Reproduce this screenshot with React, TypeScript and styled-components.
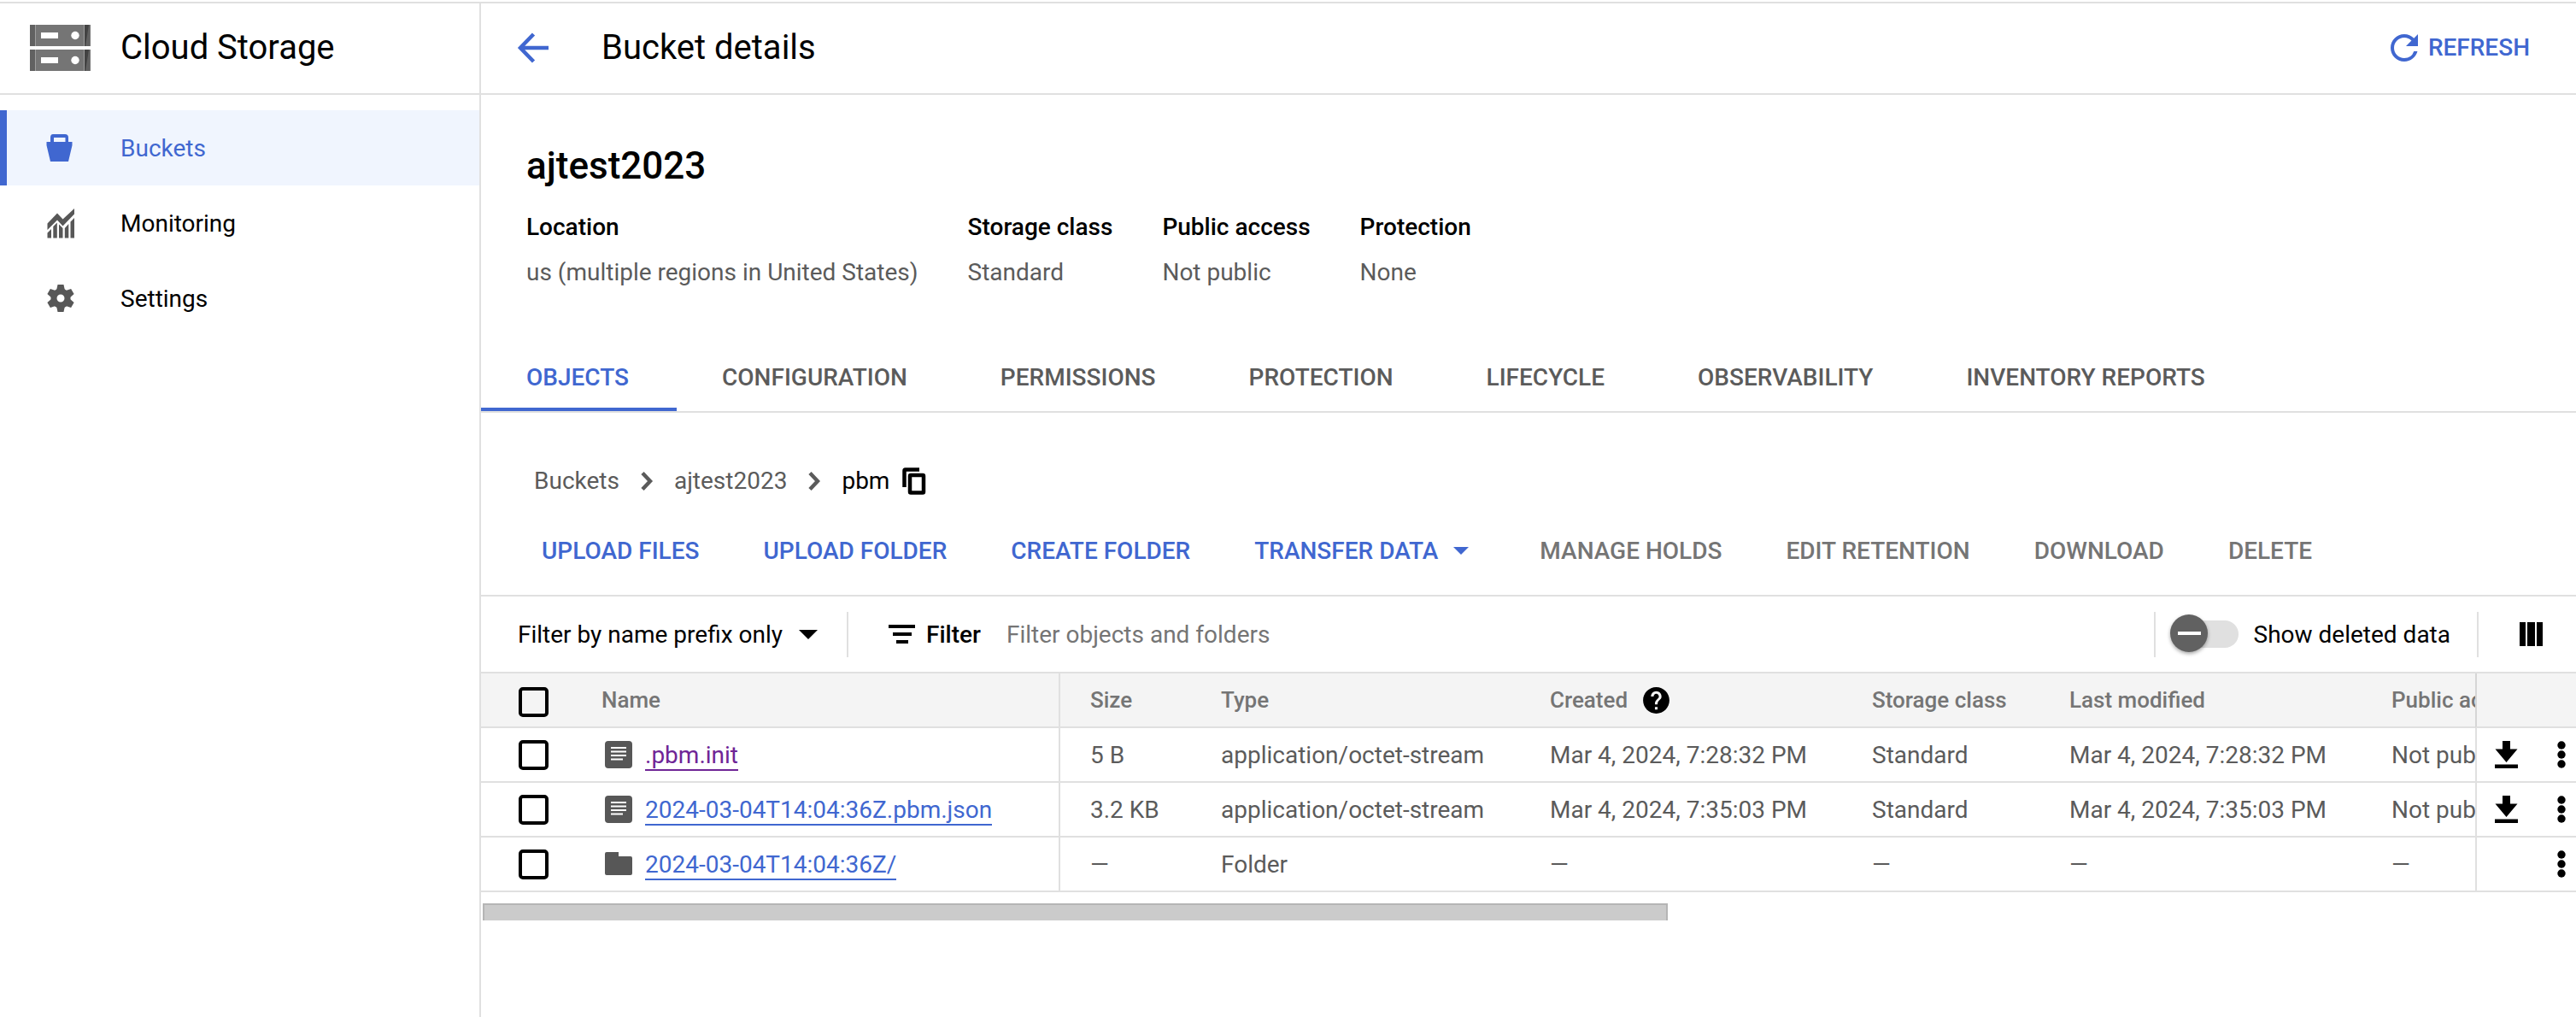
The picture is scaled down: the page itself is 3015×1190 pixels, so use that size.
import React from "react";
import styled, { createGlobalStyle } from "styled-components";
import { MdHelp, MdRefresh } from "react-icons/md";

const blue = "#4067d0";
const purple = "#6f2596";
const line = "#e0e0e0";
const grey = "#5b5b5b";
const muted = "#757575";

const GlobalStyle = createGlobalStyle`
  *, *::before, *::after { box-sizing: border-box; }
  body { margin: 0; background: #fff; }
  body, button, input, select {
    font-family: Roboto, "Liberation Sans", sans-serif;
    font-size: 28px;
    line-height: 41px;
    color: #000;
  }
  button { border: 0; padding: 0; background: none; cursor: pointer; }
  a { color: inherit; text-decoration: none; }
  svg { display: block; flex: none; }
`;

const Page = styled.div`
  display: flex;
  min-height: 100vh;
  border-top: 2px solid ${line};
  margin-top: 2px;
  margin-bottom: -2px;
`;

const Sidebar = styled.aside`
  flex: none;
  width: 563px;
  border-right: 2px solid ${line};
`;

const SidebarHeader = styled.header`
  display: flex;
  align-items: center;
  gap: 35px;
  height: 107px;
  padding: 0 35px 2px;
  border-bottom: 2px solid ${line};
`;

const Title = styled.h1`
  margin: 0;
  font-size: 40px;
  line-height: 48px;
  font-weight: 400;
`;

const Nav = styled.nav`
  display: flex;
  flex-direction: column;
  padding-top: 18px;
`;

const NavItem = styled.a<{ $active?: boolean }>`
  display: flex;
  align-items: center;
  gap: 51px;
  height: 88px;
  padding-left: 44px;
  border-left: 8px solid ${(p) => (p.$active ? blue : "transparent")};
  background: ${(p) => (p.$active ? "#f0f5fe" : "transparent")};
  color: ${(p) => (p.$active ? blue : "#000")};
  svg { color: ${(p) => (p.$active ? blue : "#575757")}; }
`;

const Main = styled.main`
  flex: 1;
  min-width: 0;
`;

const MainHeader = styled.header`
  display: flex;
  align-items: center;
  height: 107px;
  padding: 0 54px 2px 42px;
  border-bottom: 2px solid ${line};
`;

const BackButton = styled.button`
  color: ${blue};
  margin-right: 62px;
`;

const RefreshButton = styled.button`
  display: flex;
  align-items: center;
  gap: 4px;
  margin-left: auto;
  color: ${blue};
  font-weight: 500;
`;

const Summary = styled.section`
  padding: 57px 53px 56px;
`;

const BucketName = styled.h2`
  margin: 0 0 19px;
  font-size: 44px;
  line-height: 52px;
  font-weight: 500;
`;

const Facts = styled.dl`
  display: flex;
  gap: 58px;
  margin: 0;
  line-height: 53px;
  dt { font-weight: 500; }
  dd { margin: 0; color: ${grey}; }
`;

const Tabs = styled.div`
  display: flex;
  border-bottom: 2px solid ${line};
`;

const Tab = styled.button<{ $active?: boolean }>`
  height: 80px;
  padding: 4px 56px 0 53px;
  border-bottom: 4px solid ${(p) => (p.$active ? blue : "transparent")};
  color: ${(p) => (p.$active ? blue : grey)};
  font-weight: 500;
`;

const Breadcrumb = styled.nav`
  display: flex;
  align-items: center;
  gap: 25px;
  padding: 59px 62px 25px;
  color: ${grey};
`;

const Current = styled.span`
  display: flex;
  align-items: center;
  gap: 15px;
  color: #000;
`;

const Actions = styled.div`
  display: flex;
  padding: 0 34px 16px;
  border-bottom: 2px solid ${line};
`;

const Action = styled.button`
  display: flex;
  align-items: center;
  gap: 18px;
  height: 72px;
  padding: 0 38px 0 37px;
  color: ${blue};
  font-weight: 500;
  &:disabled { color: ${muted}; cursor: default; }
`;

const MenuAction = styled(Action)`
  padding-right: 46px;
`;

const FilterBar = styled.div`
  display: flex;
  align-items: center;
  height: 88px;
  padding: 0 39px 0 43px;
`;

const SelectLabel = styled.label`
  display: flex;
  align-items: center;
  gap: 19px;
  margin-right: 34px;
`;

const Select = styled.select`
  appearance: none;
  border: 0;
  padding: 0;
  background: none;
`;

const Divider = styled.span`
  flex: none;
  width: 2px;
  height: 53px;
  background: ${line};
`;

const FilterField = styled.label`
  display: flex;
  flex: 1;
  align-items: center;
  gap: 12px;
  margin-left: 47px;
  font-weight: 500;
`;

const FilterInput = styled.input`
  flex: 1;
  min-width: 0;
  margin-left: 18px;
  padding: 0;
  border: 0;
  background: none;
  outline: 0;
  &::placeholder { color: ${muted}; opacity: 1; }
`;

const SwitchLabel = styled.label`
  display: flex;
  align-items: center;
  gap: 18px;
  margin: 0 31px 0 23px;
`;

const Switch = styled.input`
  appearance: none;
  position: relative;
  width: 74px;
  height: 32px;
  margin: 0;
  border-radius: 16px;
  background: ${line};
  &::before {
    content: "";
    position: absolute;
    left: -6px;
    top: -7px;
    width: 44px;
    height: 44px;
    border-radius: 50%;
    background: #616161;
    box-shadow: 0 2px 4px rgba(0, 0, 0, 0.35);
  }
  &::after {
    content: "";
    position: absolute;
    left: 3px;
    top: 13px;
    width: 27px;
    height: 4px;
    background: #fff;
  }
`;

const ColumnsButton = styled.button`
  margin-left: 48px;
`;

const TableScroll = styled.div`
  overflow-x: auto;
  scrollbar-width: none;
  border-top: 2px solid ${line};
`;

const Table = styled.table`
  width: 4328px;
  table-layout: fixed;
  border-collapse: separate;
  border-spacing: 0;
  text-align: left;
`;

const Column = styled.col<{ $width?: number }>`
  width: ${(p) => (p.$width ? `${p.$width}px` : "auto")};
`;

const Cell = styled.td<{ $divided?: boolean }>`
  height: 64px;
  padding: 0 0 0 ${(p) => (p.$divided ? "35px" : "36px")};
  border-bottom: 2px solid ${line};
  border-left: ${(p) => (p.$divided ? `2px solid ${line}` : "0")};
  color: ${grey};
  white-space: nowrap;
`;

const HeadCell = styled(Cell).attrs({ as: "th", scope: "col" })`
  background: #f4f4f4;
  color: ${muted};
  font-size: 26px;
  font-weight: 500;
`;

const CheckCell = styled(Cell)`
  padding-left: 44px;
`;

const CheckHeadCell = styled(HeadCell)`
  padding-top: 4px;
  padding-left: 44px;
`;

const ActionCell = styled(Cell)`
  position: sticky;
  right: 0;
  padding: 0 12px 0 21px;
  border-left: 2px solid ${line};
  background: #fff;
`;

const ActionHeadCell = styled(HeadCell)`
  position: sticky;
  right: 0;
  border-left: 2px solid #d6d6d6;
`;

const Checkbox = styled.input`
  appearance: none;
  display: block;
  width: 35px;
  height: 35px;
  margin: 0;
  border: 4px solid #000;
  border-radius: 5px;
`;

const HeadLabel = styled.span`
  display: flex;
  align-items: center;
  gap: 15px;
`;

const ObjectName = styled.span`
  display: flex;
  align-items: center;
  gap: 15px;
  padding-left: 4px;
`;

const ObjectLink = styled.a<{ $visited?: boolean }>`
  padding-top: 3px;
  border-bottom: 2px solid;
  line-height: 33px;
  color: ${(p) => (p.$visited ? purple : blue)};
`;

const RowActions = styled.span`
  display: flex;
  align-items: center;
  justify-content: space-between;
`;

const MoreButton = styled.button`
  margin-left: auto;
`;

const ScrollTrack = styled.div`
  padding: 13px 2px 0;
`;

const ScrollThumb = styled.div`
  width: 56.66%;
  height: 20px;
  border: solid #b5b5b5;
  border-width: 2px 2px 0;
  background: #cbcbcb;
`;

const StorageLogo = () => (
  <svg width="71" height="54" viewBox="0 0 71 54" aria-hidden="true">
    {[0, 29].map((y) => (
      <g key={y} transform={`translate(0 ${y})`}>
        <path fill="#757575" d="M0 0h71v25H0z" />
        <path fill="#616161" d="M0 0h6v25H0z" />
        <path fill="#9e9e9e" d="M6 0h1v25H6zM63 0h1v25h-1z" />
        <path fill="#616161" d="M64 0h6v25h-6z" />
        <path fill="#424242" d="M64 0h5l-4 25h-1z" />
        <path fill="#fff" d="M13 9h20v7H13z" />
        <circle fill="#fff" cx="53" cy="12.5" r="4.7" />
      </g>
    ))}
  </svg>
);

const BucketIcon = () => (
  <svg width="38" height="38" viewBox="0 0 38 38" fill="currentColor" aria-hidden="true">
    <path
      fillRule="evenodd"
      d="M10 3h14q4 0 4 4v5h4.500v4l-4.500 19H7L2.500 16v-4H7V7q0-4 3-4zm1 4v5h13.500V7z"
    />
  </svg>
);

const MonitoringIcon = () => (
  <svg width="38" height="38" viewBox="0 0 38 38" fill="currentColor" aria-hidden="true">
    <path d="M3.500 19.500 15 7.500l6.500 7L35 2v6.500L21.500 22.500 15 15.500 3.500 27z" />
    <path d="M3.500 30.500 8 26v10.500H3.500zM10.300 23l4.500-4.500v18h-4.500zM17 20.500l4.500 4.500v11.500H17zM23.800 25l4.500-5v16.500h-4.500zM30.500 17.500 35 13v23.500h-4.500z" />
  </svg>
);

const GearIcon = () => (
  <svg width="38" height="38" viewBox="0 0 38 38" fill="currentColor" aria-hidden="true">
    <circle cx="19" cy="19" r="8" fill="none" stroke="currentColor" strokeWidth="7" />
    {[0, 60, 120, 180, 240, 300].map((angle) => (
      <path key={angle} transform={`rotate(${angle} 19 19)`} d="M15.500 3h7l1.500 7v3H14v-3z" />
    ))}
  </svg>
);

const BackIcon = () => (
  <svg width="37" height="36" viewBox="0 0 37 36" fill="none" stroke="currentColor" strokeWidth="4.500" aria-hidden="true">
    <path d="M37 18H5M19.500 2 4 18l15.500 16" />
  </svg>
);

const ChevronIcon = () => (
  <svg width="14" height="24" viewBox="0 0 14 24" fill="none" stroke="currentColor" strokeWidth="4.500" aria-hidden="true">
    <path d="M2 2.500 11 12l-9 9.500" />
  </svg>
);

const CopyIcon = () => (
  <svg width="28" height="32" viewBox="0 0 28 32" fill="none" stroke="currentColor" strokeWidth="4.500" aria-hidden="true">
    <path d="M20 2.500H3.500Q2.500 2.500 2.500 4v19" />
    <rect x="9" y="9" width="16" height="20.500" rx="1" />
  </svg>
);

const Caret = ({ width, height }: { width: number; height: number }) => (
  <svg width={width} height={height} viewBox="0 0 20 10" preserveAspectRatio="none" fill="currentColor" aria-hidden="true">
    <path d="M0 0h20L10 10z" />
  </svg>
);

const FilterIcon = () => (
  <svg width="32" height="24" viewBox="0 0 32 24" fill="currentColor" aria-hidden="true">
    <path d="M0 1h31v4H0zM5 10h22v4H5zM9 19h14v4H9z" />
  </svg>
);

const ColumnsIcon = () => (
  <svg width="27" height="28" viewBox="0 0 27 28" fill="currentColor" aria-hidden="true">
    <path d="M0 0h7v28H0zM9 0h9v28H9zM20 0h7v28h-7z" />
  </svg>
);

const FileIcon = () => (
  <svg width="32" height="32" viewBox="0 0 32 32" aria-hidden="true">
    <rect width="32" height="32" rx="4" fill="#575757" />
    <path fill="#fff" d="M7 7h18v2H7zM7 11.500h18v2H7zM7 16h18v2H7zM7 20.500h14v2H7z" />
  </svg>
);

const FolderIcon = () => (
  <svg width="32" height="28" viewBox="0 0 32 28" fill="#575757" aria-hidden="true">
    <path d="M2 0h14v5h14q2 0 2 2v18q0 2-2 2H2q-2 0-2-2V2q0-2 2-2z" />
  </svg>
);

const DownloadIcon = () => (
  <svg width="27" height="32" viewBox="0 0 27 32" aria-hidden="true">
    <path d="M9 0h9v9.500h8.500L13.500 25 .5 9.500H9zM0 27.500h27V32H0z" />
  </svg>
);

const MoreIcon = () => (
  <svg width="10" height="32" viewBox="0 0 10 32" aria-hidden="true">
    <circle cx="5" cy="5" r="4.700" />
    <circle cx="5" cy="16" r="4.700" />
    <circle cx="5" cy="27" r="4.700" />
  </svg>
);

const facts = [
  ["Location", "us (multiple regions in United States)"],
  ["Storage class", "Standard"],
  ["Public access", "Not public"],
  ["Protection", "None"],
];

const tabs = [
  "OBJECTS",
  "CONFIGURATION",
  "PERMISSIONS",
  "PROTECTION",
  "LIFECYCLE",
  "OBSERVABILITY",
  "INVENTORY REPORTS",
];

const disabledActions = ["MANAGE HOLDS", "EDIT RETENTION", "DOWNLOAD", "DELETE"];

type StorageObject = {
  name: string;
  folder?: boolean;
  visited?: boolean;
  size: string;
  type: string;
  date: string;
  storage: string;
  access: string;
};

const objects: StorageObject[] = [
  {
    name: ".pbm.init",
    visited: true,
    size: "5 B",
    type: "application/octet-stream",
    date: "Mar 4, 2024, 7:28:32 PM",
    storage: "Standard",
    access: "Not public",
  },
  {
    name: "2024-03-04T14:04:36Z.pbm.json",
    size: "3.2 KB",
    type: "application/octet-stream",
    date: "Mar 4, 2024, 7:35:03 PM",
    storage: "Standard",
    access: "Not public",
  },
  {
    name: "2024-03-04T14:04:36Z/",
    folder: true,
    size: "—",
    type: "Folder",
    date: "—",
    storage: "—",
    access: "—",
  },
];

export default function App() {
  return (
    <>
      <GlobalStyle />
      <Page>
        <Sidebar>
          <SidebarHeader>
            <StorageLogo />
            <Title as="div">Cloud Storage</Title>
          </SidebarHeader>
          <Nav>
            <NavItem href="#buckets" $active>
              <BucketIcon />
              Buckets
            </NavItem>
            <NavItem href="#monitoring">
              <MonitoringIcon />
              Monitoring
            </NavItem>
            <NavItem href="#settings">
              <GearIcon />
              Settings
            </NavItem>
          </Nav>
        </Sidebar>
        <Main>
          <MainHeader>
            <BackButton aria-label="Back">
              <BackIcon />
            </BackButton>
            <Title>Bucket details</Title>
            <RefreshButton>
              <MdRefresh size={48} />
              REFRESH
            </RefreshButton>
          </MainHeader>
          <Summary>
            <BucketName>ajtest2023</BucketName>
            <Facts>
              {facts.map(([label, value]) => (
                <div key={label}>
                  <dt>{label}</dt>
                  <dd>{value}</dd>
                </div>
              ))}
            </Facts>
          </Summary>
          <Tabs role="tablist">
            {tabs.map((tab, i) => (
              <Tab key={tab} role="tab" aria-selected={i === 0} $active={i === 0}>
                {tab}
              </Tab>
            ))}
          </Tabs>
          <Breadcrumb>
            <a href="#buckets">Buckets</a>
            <ChevronIcon />
            <a href="#ajtest2023">ajtest2023</a>
            <ChevronIcon />
            <Current>
              pbm
              <button aria-label="Copy path">
                <CopyIcon />
              </button>
            </Current>
          </Breadcrumb>
          <Actions>
            <Action>UPLOAD FILES</Action>
            <Action>UPLOAD FOLDER</Action>
            <Action>CREATE FOLDER</Action>
            <MenuAction>
              TRANSFER DATA
              <Caret width={18} height={9} />
            </MenuAction>
            {disabledActions.map((name) => (
              <Action key={name} disabled>
                {name}
              </Action>
            ))}
          </Actions>
          <FilterBar>
            <SelectLabel>
              <Select aria-label="Filter mode">
                <option>Filter by name prefix only</option>
              </Select>
              <Caret width={22} height={11} />
            </SelectLabel>
            <Divider />
            <FilterField>
              <FilterIcon />
              Filter
              <FilterInput placeholder="Filter objects and folders" />
            </FilterField>
            <Divider />
            <SwitchLabel>
              <Switch type="checkbox" role="switch" />
              Show deleted data
            </SwitchLabel>
            <Divider />
            <ColumnsButton aria-label="Column display options">
              <ColumnsIcon />
            </ColumnsButton>
          </FilterBar>
          <TableScroll>
            <Table>
              <colgroup>
                <Column $width={105} />
                <Column $width={571} />
                <Column $width={154} />
                <Column $width={385} />
                <Column $width={377} />
                <Column $width={231} />
                <Column $width={377} />
                <Column />
                <Column $width={118} />
              </colgroup>
              <thead>
                <tr>
                  <CheckHeadCell>
                    <Checkbox type="checkbox" aria-label="Select all objects" />
                  </CheckHeadCell>
                  <HeadCell>Name</HeadCell>
                  <HeadCell $divided>Size</HeadCell>
                  <HeadCell>Type</HeadCell>
                  <HeadCell>
                    <HeadLabel>
                      Created
                      <MdHelp size={37} color="#000" />
                    </HeadLabel>
                  </HeadCell>
                  <HeadCell>Storage class</HeadCell>
                  <HeadCell>Last modified</HeadCell>
                  <HeadCell>Public access</HeadCell>
                  <ActionHeadCell aria-label="Actions" />
                </tr>
              </thead>
              <tbody>
                {objects.map((o) => (
                  <tr key={o.name}>
                    <CheckCell>
                      <Checkbox type="checkbox" aria-label={`Select ${o.name}`} />
                    </CheckCell>
                    <Cell>
                      <ObjectName>
                        {o.folder ? <FolderIcon /> : <FileIcon />}
                        <ObjectLink href={`#${o.name}`} $visited={o.visited}>
                          {o.name}
                        </ObjectLink>
                      </ObjectName>
                    </Cell>
                    <Cell $divided>{o.size}</Cell>
                    <Cell>{o.type}</Cell>
                    <Cell>{o.date}</Cell>
                    <Cell>{o.storage}</Cell>
                    <Cell>{o.date}</Cell>
                    <Cell>{o.access}</Cell>
                    <ActionCell>
                      <RowActions>
                        {!o.folder && (
                          <button aria-label={`Download ${o.name}`}>
                            <DownloadIcon />
                          </button>
                        )}
                        <MoreButton aria-label={`More actions for ${o.name}`}>
                          <MoreIcon />
                        </MoreButton>
                      </RowActions>
                    </ActionCell>
                  </tr>
                ))}
              </tbody>
            </Table>
          </TableScroll>
          <ScrollTrack>
            <ScrollThumb />
          </ScrollTrack>
        </Main>
      </Page>
    </>
  );
}
